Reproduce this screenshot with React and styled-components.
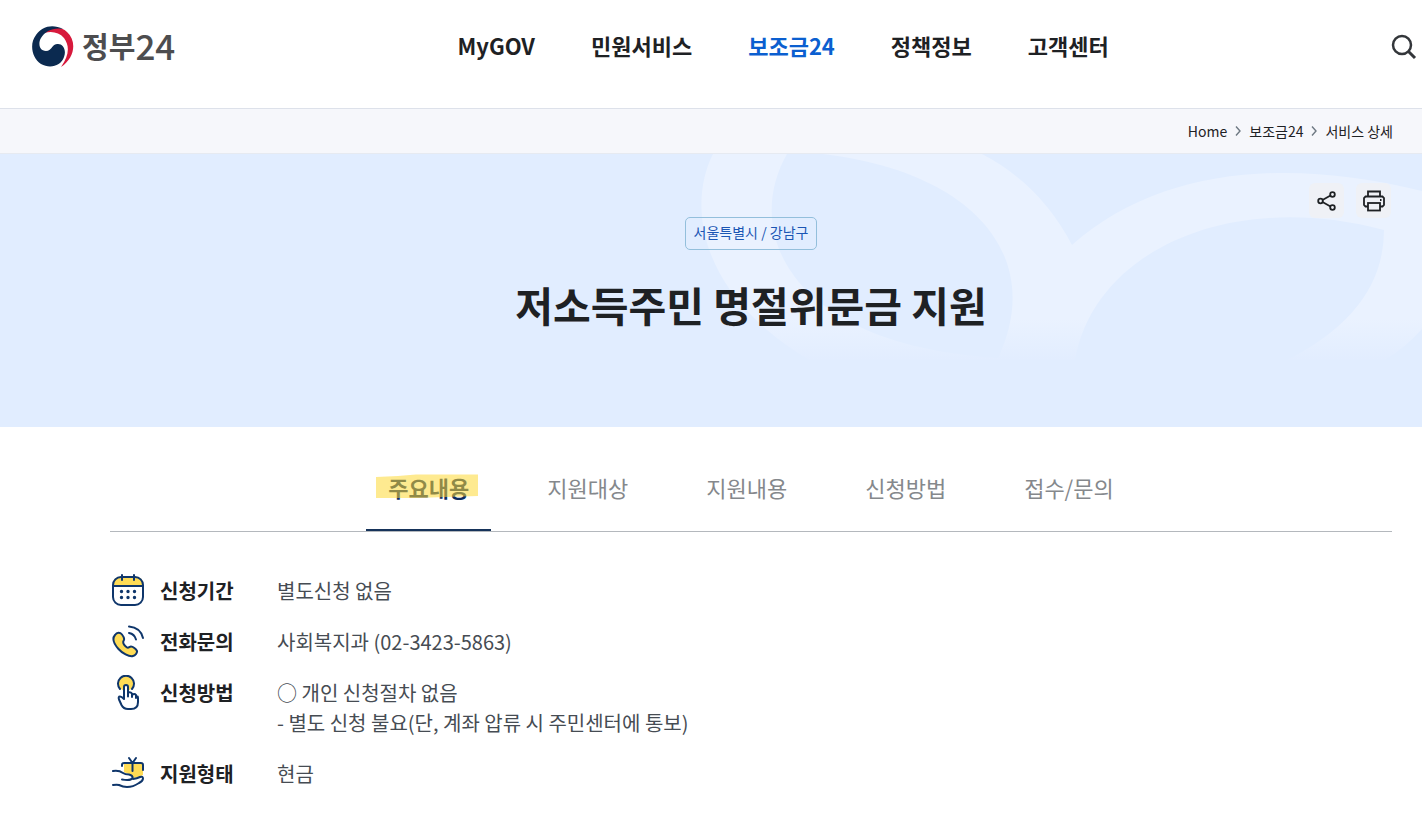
import styled, { createGlobalStyle, css } from "styled-components";
import { useState } from "react";

const GlobalStyle = createGlobalStyle`
  * {
    box-sizing: border-box;
    margin: 0;
    padding: 0;
  }

  body {
    background: #fff;
    color: #1e2124;
    font-family: "Noto Sans CJK KR", "Noto Sans", sans-serif;
  }

  a {
    color: inherit;
    text-decoration: none;
  }

  button {
    border: none;
    background: none;
    font-family: inherit;
    cursor: pointer;
  }

  svg {
    display: block;
  }
`;

const Header = styled.header`
  display: flex;
  align-items: center;
  justify-content: space-between;
  padding: 17px 5px 31px 32px;
  border-bottom: 1px solid #dde1ea;
`;

const Logo = styled.a`
  display: flex;
  align-items: center;
  gap: 7px;
  height: 60px;
  color: #4d4d4f;
`;

const LogoText = styled.span`
  display: flex;
  align-items: center;
  padding-bottom: 4px;
  font-size: 29px;
  font-weight: 700;
  line-height: 40px;
`;

const LogoNumber = styled.span`
  font-size: 35px;
  font-weight: 500;
`;

const NavList = styled.ul`
  display: flex;
  gap: 56px;
  padding-bottom: 4px;
  list-style: none;
`;

const NavLink = styled.a`
  font-size: 22px;
  font-weight: 700;
  line-height: 32px;
  color: ${(props) => (props.$active ? "#0b5fd0" : "#1e2124")};
`;

const Breadcrumb = styled.nav`
  display: flex;
  align-items: center;
  justify-content: flex-end;
  gap: 8px;
  height: 45px;
  padding-right: 29px;
  border-bottom: 1px solid #e6eaf1;
  background: #f6f7fb;
  font-size: 14px;
  line-height: 20px;
`;

const Hero = styled.section`
  position: relative;
  display: flex;
  flex-direction: column;
  align-items: center;
  padding: 63px 30px 92px 110px;
  background: #e1edff;
`;

const HeroPattern = styled.svg`
  position: absolute;
  top: 0;
  right: 0;
`;

const Region = styled.p`
  position: relative;
  padding: 3px 8px 6px;
  border: 1px solid #93bfdc;
  border-radius: 5px;
  color: #1a56b4;
  font-size: 14px;
  line-height: 22px;
`;

const Title = styled.h1`
  position: relative;
  margin-top: 23px;
  font-size: 41px;
  font-weight: 700;
  line-height: 62px;
`;

const HeroTools = styled.div`
  position: absolute;
  top: 29px;
  right: 31px;
  display: flex;
  gap: 12px;
`;

const ToolButton = styled.button`
  display: grid;
  place-items: center;
  width: 35px;
  height: 35px;
  border-radius: 6px;
  background: #eff1f6;
  color: #1e2124;
`;

const Content = styled.main`
  margin: 0 30px 0 110px;
`;

const TabList = styled.div`
  display: flex;
  justify-content: center;
  gap: 34px;
  padding-top: 44px;
  border-bottom: 1px solid #b4b8bd;
`;

const Tab = styled.button`
  padding: 0 22px 26px;
  border-bottom: 2px solid transparent;
  color: #85888c;
  font-size: 22px;
  line-height: 32px;

  ${(props) =>
    props.$active &&
    css`
      border-color: #16335a;
      color: #0c2b60;
      font-weight: 700;
    `}
`;

const TabLabel = styled.span`
  position: relative;
  display: block;
`;

const Highlight = styled.svg`
  position: absolute;
  top: 3px;
  left: -12px;
  pointer-events: none;
`;

const InfoList = styled.dl`
  display: flex;
  flex-direction: column;
  gap: 15px;
  padding: 41px 0 20px;
`;

const InfoRow = styled.div`
  display: grid;
  grid-template-columns: 36px 103px 1fr;
  column-gap: 14px;
  font-size: 20px;
  line-height: 30px;
`;

const InfoLabel = styled.dt`
  padding: 3px 0;
  font-weight: 700;
`;

const InfoValue = styled.dd`
  padding: 3px 0;
  color: #464c53;
`;

const navItems = ["MyGOV", "민원서비스", "보조금24", "정책정보", "고객센터"];

const tabs = ["주요내용", "지원대상", "지원내용", "신청방법", "접수/문의"];

const infoRows = [
  { icon: CalendarIcon, label: "신청기간", lines: ["별도신청 없음"] },
  { icon: PhoneIcon, label: "전화문의", lines: ["사회복지과 (02-3423-5863)"] },
  {
    icon: TouchIcon,
    label: "신청방법",
    lines: [
      "○ 개인 신청절차 없음",
      "- 별도 신청 불요(단, 계좌 압류 시 주민센터에 통보)",
    ],
  },
  { icon: GiftIcon, label: "지원형태", lines: ["현금"] },
];

function LogoMark() {
  return (
    <svg width="43" height="42" viewBox="0 0 43 42" aria-hidden="true">
      <path
        fill="#d7193c"
        d="M7 10C14 1 28 -1 35 6C45 15 43 32 29 41C37 30 38 20 32 12C26 5 15 4 7 10Z"
      />
      <path
        fill="#0b2a50"
        d="M31 3C21 -2 10 0 4 9C-3 18 0 32 9 38C18 43 29 40 32 31C35 23 30 17 25 18C19 19 20 25 14 25C7 25 6 17 9 12C13 5 22 1 31 3Z"
      />
    </svg>
  );
}

function IconFrame({ children }) {
  return (
    <svg
      width="36"
      height="36"
      viewBox="0 0 36 36"
      fill="none"
      stroke="#0f366b"
      strokeWidth="2"
      strokeLinecap="round"
      strokeLinejoin="round"
      aria-hidden="true"
    >
      {children}
    </svg>
  );
}

function CalendarIcon() {
  return (
    <IconFrame>
      <path
        fill="#ffdc55"
        stroke="none"
        d="M3 13V11Q3 4 10 4H26Q33 4 33 11V13Z"
      />
      <rect x="3" y="4" width="30" height="28" rx="8" />
      <path d="M3 13H33M12 2V7M24 2V7" />
      <path
        strokeWidth="3.400"
        d="M11.500 18.500h.01M18 18.500h.01M24.500 18.500h.01M11.500 24.500h.01M18 24.500h.01M24.500 24.500h.01"
      />
    </IconFrame>
  );
}

function PhoneIcon() {
  return (
    <IconFrame>
      <path
        fill="#ffdc55"
        d="M5 11C7 8 10 8 12 10.500C14 13 15 15 13.500 17C12.500 19 14.500 21.500 17 23.500C18.500 24.500 19.500 22.500 21 22.500C23 22.500 26 25 27 27C27.500 29 25 31.500 23 32C19 33 12 29 8.500 25C4.500 20.500 1.500 15 5 11Z"
      />
      <path d="M19 9Q24.500 10 26 15.500M19 2.500Q30.500 3.500 33 14" />
    </IconFrame>
  );
}

function TouchIcon() {
  return (
    <IconFrame>
      <circle cx="16" cy="8.500" r="7.500" fill="#ffdc55" stroke="none" />
      <path d="M10 14A8 8 0 1 1 22 14" />
      <path
        fill="#fff"
        d="M14 24V12Q14 10 16 10Q18 10 18 12V19V17.500Q20.500 16.500 22 18.500V20Q24.500 18 26 20V21.500Q28 20.500 28 23V27Q28 34 21 34H18Q13.500 34 11.500 30L9 24.500Q8 21.500 10 21.500Q11.500 21.500 14 24Z"
      />
      <path d="M18 18V21.500M22 19V22M26 20.500V23" />
    </IconFrame>
  );
}

function GiftIcon() {
  return (
    <IconFrame>
      <path
        fill="#ffdc55"
        stroke="none"
        d="M14 7H33V19Q28 22 23 22Q21 18 16 17Q13 16 14 14Z"
      />
      <path d="M12 10V9Q12 7 14 7H31Q33 7 33 9V14M22.500 7V15M19 2L22.500 7L26 2" />
      <path d="M3 15Q9 14 13 17Q15 18.500 19 18.500Q23 19.500 22.500 22Q21 25 12 23.500M23 23Q27 22.500 30 21Q33 20 33 22.500Q33 25 29 27Q23 31 17 31Q13 31 9 29Q7 28.500 3 29" />
    </IconFrame>
  );
}

function SearchIcon() {
  return (
    <svg
      width="26"
      height="26"
      viewBox="0 0 26 26"
      fill="none"
      stroke="#33363a"
      strokeWidth="2.500"
    >
      <circle cx="11" cy="11" r="9" />
      <path d="M17.500 17.500L24 24" strokeWidth="3" />
    </svg>
  );
}

function ShareIcon() {
  return (
    <svg
      width="24"
      height="24"
      viewBox="0 0 24 24"
      fill="none"
      stroke="currentColor"
      strokeWidth="1.800"
    >
      <circle cx="5.500" cy="12" r="2.300" />
      <circle cx="17.500" cy="5.500" r="2.300" />
      <circle cx="17.500" cy="18.500" r="2.300" />
      <path d="M7.500 11L15.500 6.500M7.500 13L15.500 17.500" />
    </svg>
  );
}

function PrintIcon() {
  return (
    <svg
      width="24"
      height="24"
      viewBox="0 0 24 24"
      fill="none"
      stroke="currentColor"
      strokeWidth="1.800"
    >
      <path d="M6 7.500V2.500H18V7.500" />
      <path d="M6 17.500H3.500L2 16V9L3.500 7.500H20.500L22 9V16L20.500 17.500H18" />
      <rect x="6" y="14" width="12" height="7.500" />
      <path d="M18 11H19.500" />
    </svg>
  );
}

function Chevron() {
  return (
    <svg
      width="6"
      height="10"
      viewBox="0 0 6 10"
      fill="none"
      stroke="#6d7882"
      strokeWidth="1.400"
      aria-hidden="true"
    >
      <path d="M1 0.500L5 5L1 9.500" />
    </svg>
  );
}

function App() {
  const [activeTab, setActiveTab] = useState(tabs[0]);

  return (
    <>
      <GlobalStyle />
      <Header>
        <Logo href="#home">
          <LogoMark />
          <LogoText>
            정부<LogoNumber>24</LogoNumber>
          </LogoText>
        </Logo>
        <nav>
          <NavList>
            {navItems.map((item) => (
              <li key={item}>
                <NavLink href="#menu" $active={item === "보조금24"}>
                  {item}
                </NavLink>
              </li>
            ))}
          </NavList>
        </nav>
        <button type="button" aria-label="검색">
          <SearchIcon />
        </button>
      </Header>

      <Breadcrumb>
        <a href="#home">Home</a>
        <Chevron />
        <a href="#subsidy">보조금24</a>
        <Chevron />
        <a href="#detail">서비스 상세</a>
      </Breadcrumb>

      <Hero>
        <HeroPattern
          width="732"
          height="206"
          viewBox="690 153 732 206"
          aria-hidden="true"
        >
          <defs>
            <linearGradient id="fade" x1="0" y1="0" x2="0" y2="1">
              <stop offset="0.8" stopColor="#eaf2ff" />
              <stop offset="1" stopColor="#e2edff" />
            </linearGradient>
          </defs>
          <path
            fill="url(#fade)"
            fillRule="evenodd"
            d="M713 153C689 200 694 290 809 359H1385Q1406 346 1422 328V190C1290 157 1160 166 1072 244Q1040 183 982 153Z
              M787 153C743 230 788 344 998 357C1044 260 980 172 823 153Z
              M1075 359C1094 250 1230 188 1384 229Q1384 310 1287 359Z"
          />
        </HeroPattern>
        <Region>서울특별시 / 강남구</Region>
        <Title>저소득주민 명절위문금 지원</Title>
        <HeroTools>
          <ToolButton type="button" aria-label="공유하기">
            <ShareIcon />
          </ToolButton>
          <ToolButton type="button" aria-label="인쇄하기">
            <PrintIcon />
          </ToolButton>
        </HeroTools>
      </Hero>

      <Content>
        <TabList role="tablist">
          {tabs.map((tab) => (
            <Tab
              key={tab}
              type="button"
              role="tab"
              aria-selected={tab === activeTab}
              $active={tab === activeTab}
              onClick={() => setActiveTab(tab)}
            >
              <TabLabel>
                {tab}
                {tab === activeTab && (
                  <Highlight width="102" height="26" viewBox="0 0 102 26">
                    <path
                      fill="#fdd835"
                      fillOpacity="0.55"
                      d="M0 3L22 2L40 0.500H102V22L70 23L40 24L0 24Z"
                    />
                  </Highlight>
                )}
              </TabLabel>
            </Tab>
          ))}
        </TabList>

        <InfoList>
          {infoRows.map(({ icon: Icon, label, lines }) => (
            <InfoRow key={label}>
              <Icon />
              <InfoLabel>{label}</InfoLabel>
              <InfoValue>
                {lines.map((line) => (
                  <p key={line}>{line}</p>
                ))}
              </InfoValue>
            </InfoRow>
          ))}
        </InfoList>
      </Content>
    </>
  );
}

export default App;
